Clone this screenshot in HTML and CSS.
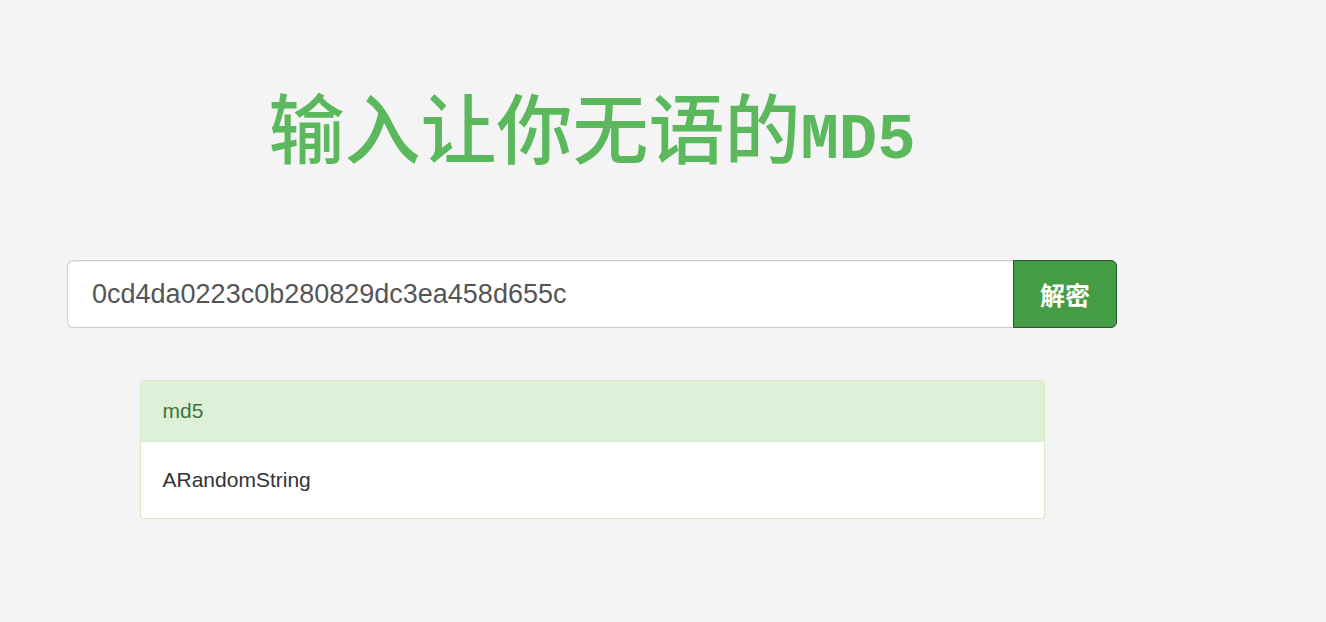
FILE: index.html
```html
<!DOCTYPE html>
<html lang="zh-CN">
<head>
<meta charset="UTF-8">
<meta name="viewport" content="width=device-width, initial-scale=1.0">
<title>输入让你无语的MD5</title>
<link rel="stylesheet" href="styles.css">
</head>
<body>
<div class="page">
  <h1 class="title">输入让你无语的<span class="title-latin">MD5</span></h1>
  <form class="search-group" onsubmit="return false;">
    <input class="search-input" type="text" value="0cd4da0223c0b280829dc3ea458d655c">
    <button class="search-button" type="submit">解密</button>
  </form>
  <div class="result-panel">
    <div class="result-heading">md5</div>
    <div class="result-body">ARandomString</div>
  </div>
</div>
</body>
</html>
```

FILE: styles.css
```css
body {
  margin: 0;
  background-color: #f4f4f4;
  font-family: "Liberation Sans", Arial, "Noto Sans CJK SC", sans-serif;
  color: #333;
}
.page {
  width: 1050px;
  margin-left: 67px;
  display: flex;
  flex-direction: column;
  align-items: center;
}
.title {
  margin: 73px 0 0 0;
  height: 104px;
  font-family: "Noto Sans CJK SC", sans-serif;
  font-size: 76px;
  font-weight: 500;
  line-height: 104px;
  color: #5cb85c;
}
.title-latin {
  font-family: "Liberation Mono", monospace;
  font-size: 64px;
  font-weight: bold;
}
.search-group {
  display: flex;
  width: 100%;
  margin-top: 83px;
}
.search-input {
  flex: 1;
  height: 68px;
  box-sizing: border-box;
  padding: 0 24px;
  font-family: "Liberation Sans", Arial, sans-serif;
  font-size: 27px;
  color: #555;
  background-color: white;
  border: 1px solid #ccc;
  border-right: none;
  border-radius: 6px 0 0 6px;
  box-shadow: inset 0 1px 1px rgba(0, 0, 0, 0.075);
  outline: none;
}
.search-button {
  width: 104px;
  height: 68px;
  font-family: "Noto Sans CJK SC", sans-serif;
  font-size: 25px;
  font-weight: bold;
  color: white;
  background-color: #449d44;
  border: 1px solid #255625;
  border-radius: 0 6px 6px 0;
  cursor: pointer;
}
.result-panel {
  width: 903px;
  margin-top: 52px;
  background-color: white;
  border: 1px solid #d6e9c6;
  border-radius: 4px;
  box-shadow: 0 1px 2px rgba(0, 0, 0, 0.06);
  overflow: hidden;
}
.result-heading {
  height: 61px;
  box-sizing: border-box;
  padding: 0 22px;
  display: flex;
  align-items: center;
  font-size: 21px;
  color: #3c763d;
  background-color: #dff0d8;
  border-bottom: 1px solid #d6e9c6;
}
.result-body {
  height: 76px;
  box-sizing: border-box;
  padding: 0 22px;
  display: flex;
  align-items: center;
  font-size: 21px;
}
```
